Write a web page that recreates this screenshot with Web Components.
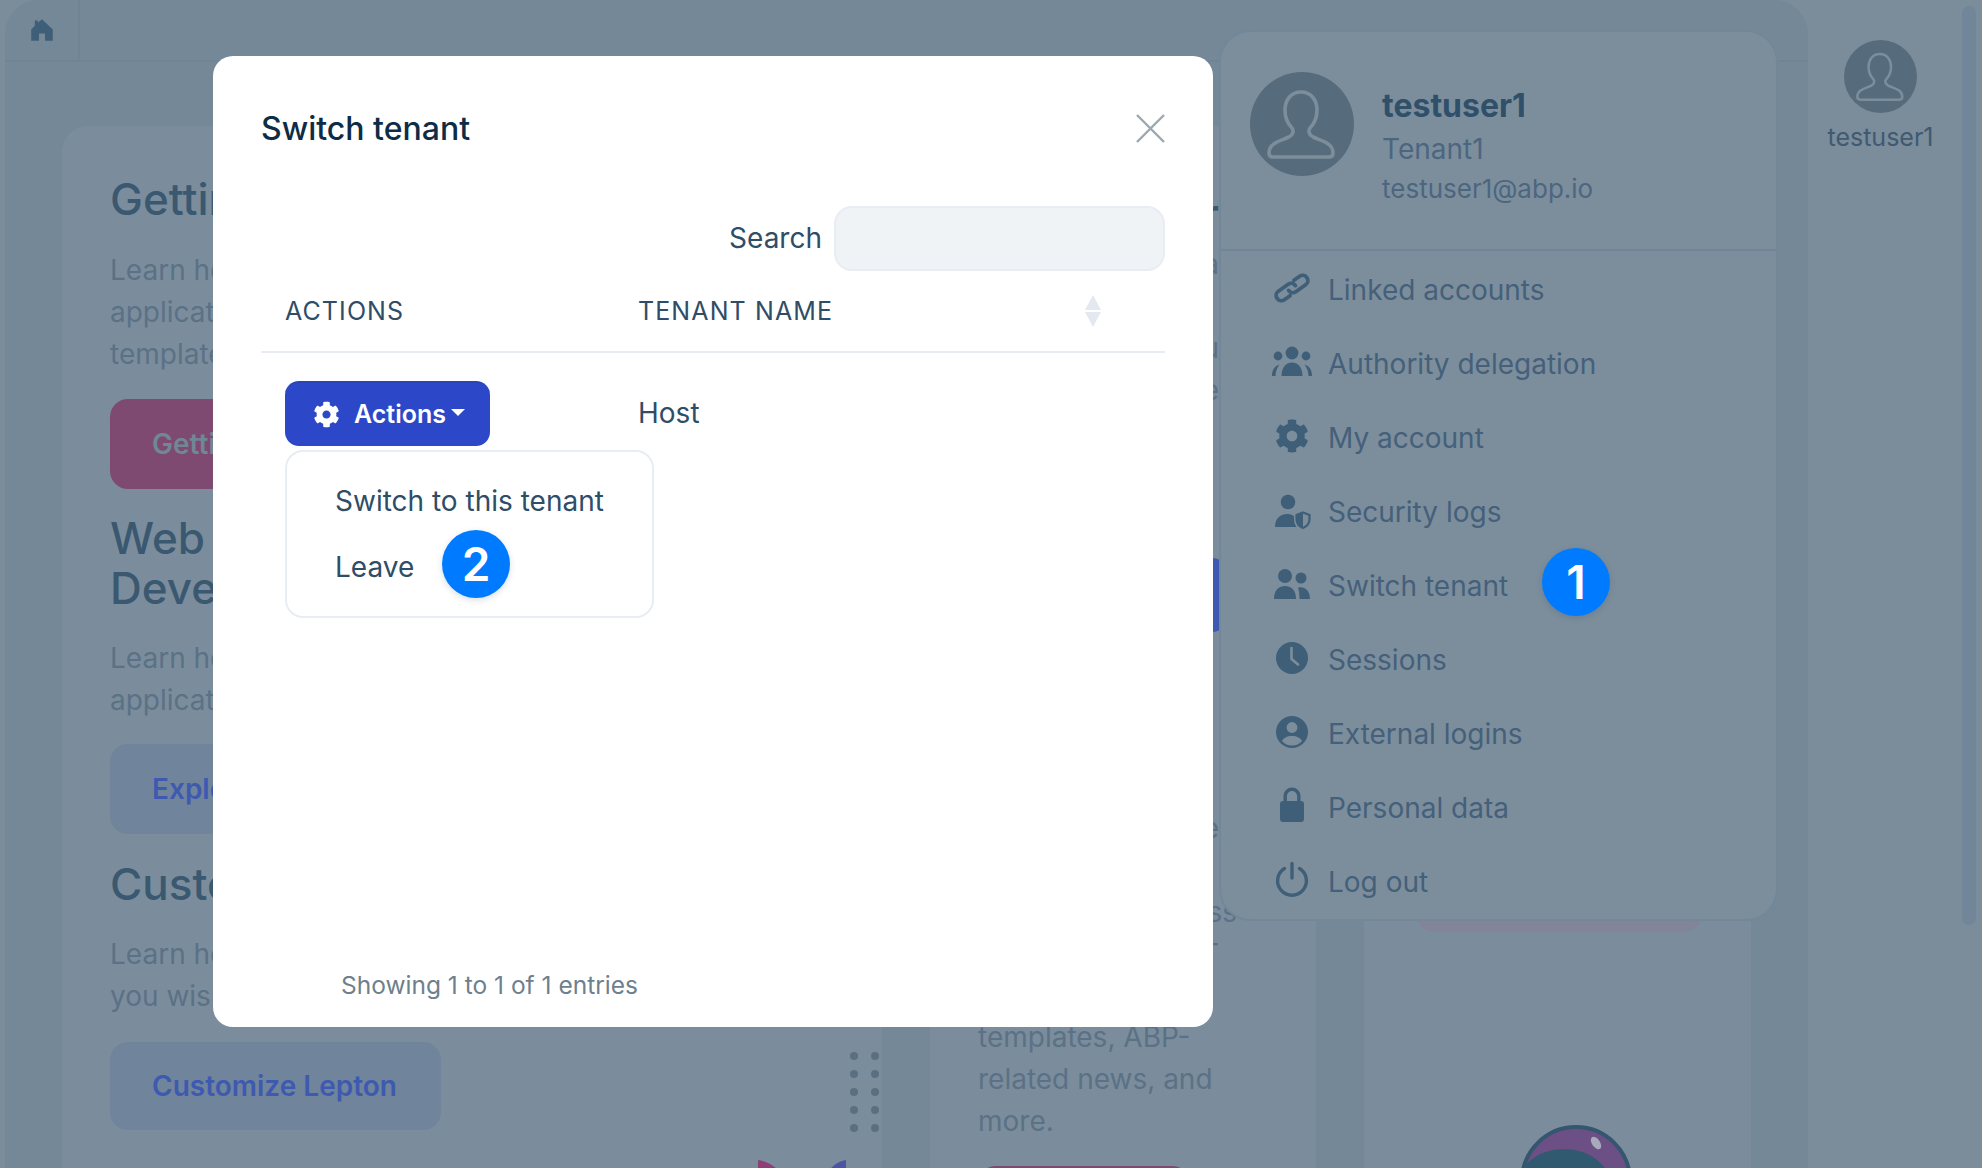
<!doctype html>
<html lang="en">
<head>
<meta charset="utf-8">
<title>Switch tenant</title>
<style>
  html, body { margin: 0; height: 100%; overflow: hidden; }
  body { font-family: Inter, "Liberation Sans", sans-serif; background: #7b8c9b; color: #45607a; }
</style>
</head>
<body>
<x-shell></x-shell>
<script>
const component = (name, html) => customElements.define(name, class extends HTMLElement {
  constructor() {
    super();
    this.attachShadow({ mode: "open" }).innerHTML = html;
  }
});

const ICONS = {
  home: `<path d="M20 2 L38 19 V38 H25 V26 H15 V38 H2 V19 L8 13 V4 H13 V8Z"/>`,
  link: `<g transform="rotate(-35 20 20)" fill="none" stroke="currentColor" stroke-width="3.800" stroke-linecap="round"><path d="M14 25.200H7a5.200 5.200 0 0 1 0-10.400H19a5.200 5.200 0 0 1 5.200 5.200"/><path d="M15.800 20a5.200 5.200 0 0 0 5.200 5.200H33a5.200 5.200 0 0 0 0-10.400H26"/></g>`,
  users: `<circle cx="20" cy="11" r="6.400"/><circle cx="6" cy="14" r="4.400"/><circle cx="34" cy="14" r="4.400"/><path d="M9.500 34c0-8 4-13.500 10.500-13.500S30.500 26 30.500 34z"/><path d="M0 34c0-6 2.500-10 7.500-11.500C5 26 3.500 30 3.500 34z"/><path d="M40 34c0-6-2.500-10-7.500-11.500C35 26 36.500 30 36.500 34z"/>`,
  gear: `<path transform="translate(3 3) scale(.0664)" d="M487.400 315.700l-42.600-24.600c4.300-23.200 4.300-47 0-70.200l42.600-24.600c4.900-2.800 7.100-8.600 5.500-14-11.100-35.600-30-67.800-54.700-94.600-3.800-4.100-10-5.100-14.800-2.300L380.800 110c-17.900-15.400-38.500-27.300-60.800-35.100V25.800c0-5.600-3.900-10.500-9.400-11.700-36.700-8.200-74.300-7.800-109.200 0-5.500 1.200-9.400 6.100-9.400 11.700V75c-22.200 7.900-42.800 19.800-60.800 35.100L88.700 85.500c-4.900-2.800-11-1.900-14.800 2.300-24.700 26.700-43.600 58.900-54.700 94.600-1.700 5.400.6 11.200 5.500 14L67.300 221c-4.300 23.200-4.300 47 0 70.200l-42.600 24.600c-4.900 2.800-7.100 8.600-5.500 14 11.100 35.600 30 67.800 54.700 94.600 3.800 4.100 10 5.100 14.800 2.300l42.600-24.600c17.900 15.400 38.500 27.300 60.800 35.100v49.200c0 5.600 3.900 10.500 9.400 11.700 36.700 8.200 74.300 7.800 109.200 0 5.500-1.200 9.400-6.100 9.400-11.700v-49.200c22.200-7.900 42.800-19.800 60.800-35.100l42.600 24.600c4.900 2.800 11 1.900 14.800-2.300 24.700-26.700 43.600-58.900 54.700-94.600 1.500-5.500-.7-11.300-5.600-14.100zM256 336c-44.100 0-80-35.900-80-80s35.900-80 80-80 80 35.900 80 80-35.900 80-80 80z"/>`,
  shield: `<circle cx="16" cy="12" r="7.300"/><path d="M3 37c0-8 5-13 12-13 2 0 3.500.3 5 1 1.300.6 2 1 2 1v3c0 3 1 6 2.500 8z"/><path d="M31 22.500l6.500 2.500v4c0 4.500-2.800 7.500-6.500 9-3.700-1.500-6.500-4.500-6.500-9v-4z" fill="none" stroke="currentColor" stroke-width="2.200"/><path d="M31 22.500V38c-3.700-1.500-6.500-4.500-6.500-9v-4z"/>`,
  swap: `<circle cx="13" cy="12" r="7"/><circle cx="29" cy="14" r="5.500"/><path d="M2 35c0-8 4-13 11-13s11 5 11 13z"/><path d="M26 23.500c6.500-1.500 12 3 12 11.500H27.500c0-4.500-.5-8.500-1.500-11.500z"/>`,
  clock: `<circle cx="20" cy="20" r="16"/><path d="M19.500 10V21l6.500 5.500" fill="none" stroke="#7c8e9c" stroke-width="2.600" stroke-linecap="round" stroke-linejoin="round"/>`,
  person: `<circle cx="20" cy="20" r="16"/><circle cx="20" cy="15.500" r="5.400" fill="#7c8e9c"/><path d="M10 29c1.500-3 5-5 10-5s8.500 2 10 5c-2.500 3-6 4.500-10 4.500s-7.500-1.500-10-4.500z" fill="#7c8e9c"/>`,
  lock: `<rect x="8" y="15" width="24" height="21" rx="3"/><path d="M13.200 16v-6a6.800 6.800 0 0 1 13.600 0v6" fill="none" stroke="currentColor" stroke-width="3.400"/>`,
  power: `<path d="M12.500 8.500A14.400 14.400 0 1 0 27.500 8.500" fill="none" stroke="currentColor" stroke-width="3.400" stroke-linecap="round"/><path d="M20 3.500V18" fill="none" stroke="currentColor" stroke-width="3.400" stroke-linecap="round"/>`
};

class XIcon extends HTMLElement {
  constructor() {
    super();
    this.attachShadow({ mode: "open" });
  }

  connectedCallback() {
    this.shadowRoot.innerHTML = `
      <style>
        :host { display: block; width: 40px; height: 40px; flex: none; color: #3f5f78; }
        svg { display: block; width: 100%; height: 100%; fill: currentColor; }
      </style>
      <svg viewBox="0 0 40 40">${ICONS[this.getAttribute("name")]}</svg>`;
  }
}
customElements.define("x-icon", XIcon);

component("x-avatar", `
  <style>
    :host { display: block; width: var(--size, 104px); height: var(--size, 104px); flex: none; }
    svg { display: block; width: 100%; height: 100%; }
  </style>
  <svg viewBox="0 0 104 104">
    <circle cx="52" cy="52" r="52" fill="#566c7d"/>
    <path d="M51 20C41 20 35 28 35 38C35 47 38 52 42 56C44 59 43 63 39 65C30 69 19 71 19 81Q19 85 23 85H79Q83 85 83 81C83 71 72 69 63 65C59 63 58 59 60 56C64 52 67 47 67 38C67 28 61 20 51 20Z" fill="none" stroke="#7c8e9c" stroke-width="3.600"/>
  </svg>`);

component("x-step-badge", `
  <style>
    :host {
      position: absolute; display: flex; align-items: center; justify-content: center;
      width: 68px; height: 68px; border-radius: 50%;
      background: #007bff; color: #fff;
      font: 600 46px/1 Inter, "Liberation Sans", sans-serif;
      box-shadow: 0 2px 6px rgba(40, 60, 90, .18);
    }
  </style>
  <slot></slot>`);

component("x-soft-button", `
  <style>
    :host {
      display: flex; align-items: center; box-sizing: border-box;
      height: var(--h, 90px); width: var(--w, 331px); padding-left: 42px; flex: none;
      border-radius: 18px; background: var(--bg, #70849c); color: var(--fg, #3e5ab0);
      font: 600 28px/1 Inter, "Liberation Sans", sans-serif; white-space: nowrap; overflow: hidden;
    }
  </style>
  <slot></slot>`);

component("x-menu-item", `
  <style>
    :host { display: flex; align-items: center; height: 74px; padding-left: 51px; gap: 16px; color: #45607a; font-size: 28px; white-space: nowrap; position: relative; }
    ::slotted(x-icon) { margin-top: -4px; }
  </style>
  <slot></slot>`);

component("x-account-menu", `
  <style>
    :host {
      position: absolute; left: 1219px; top: 30px; width: 559px; height: 891px; box-sizing: border-box;
      display: block; background: #7c8e9c; border: 2px solid #72879a; border-radius: 32px;
    }
    header { display: flex; height: 219px; box-sizing: border-box; padding: 40px 0 0 29px; gap: 28px; border-bottom: 2px solid #70859a; }
    .who { display: flex; flex-direction: column; }
    .name { font-size: 32px; font-weight: 700; line-height: 40px; margin-top: 14px; color: #30506a; }
    .tenant { font-size: 28px; line-height: 40px; margin-top: 3px; color: #4c6680; }
    .mail { font-size: 26px; line-height: 40px; color: #4c6680; }
    nav { padding-top: 2px; }
  </style>
  <header>
    <x-avatar></x-avatar>
    <div class="who">
      <div class="name">testuser1</div>
      <div class="tenant">Tenant1</div>
      <div class="mail">testuser1@abp.io</div>
    </div>
  </header>
  <nav><slot></slot></nav>`);

component("x-actions-menu", `
  <style>
    :host { display: block; position: relative; width: 205px; height: 65px; }
    button {
      display: flex; align-items: center; box-sizing: border-box; width: 205px; height: 65px; padding: 0 0 0 26px; gap: 12px;
      background: #2c48c8; border: 0; border-top: 2px solid #2a44ba; border-radius: 14px; color: #fff;
      font: 600 25px/1 Inter, "Liberation Sans", sans-serif;
    }
    x-icon { width: 31px; height: 31px; color: #fff; }
    .label { display: flex; align-items: center; gap: 5px; }
    .caret { width: 0; height: 0; border: 7px solid transparent; border-top-color: #fff; border-bottom: 0; margin-top: -4px; }
    .menu {
      position: absolute; left: 0; top: 69px; width: 369px; height: 168px; box-sizing: border-box;
      background: #fff; border: 2px solid #e8edf3; border-radius: 18px; padding: 29px 0 0 48px;
      font-size: 28px; color: #2f4d66; z-index: 2;
    }
    .menu div { width: fit-content; line-height: 40px; white-space: nowrap; }
    .menu div + div { margin-top: 26px; }
    x-step-badge { left: 155px; top: 78px; }
  </style>
  <button><x-icon name="gear"></x-icon><span class="label">Actions<span class="caret"></span></span></button>
  <div class="menu">
    <div>Switch to this tenant</div>
    <div>Leave</div>
    <x-step-badge>2</x-step-badge>
  </div>`);

component("x-tenant-modal", `
  <style>
    :host {
      position: absolute; left: 213px; top: 56px; width: 1000px; height: 971px; box-sizing: border-box;
      display: flex; flex-direction: column; padding: 48px 48px 27px; background: #fff; border-radius: 20px;
      color: #2f4d66; font-size: 28px; z-index: 3;
    }
    .title { display: flex; justify-content: space-between; align-items: center; height: 48px; font-size: 32px; font-weight: 500; color: #0f2c46; }
    .close { width: 29px; height: 29px; display: block; }
    .search { display: flex; justify-content: flex-end; align-items: center; gap: 12px; margin-top: 54px; }
    .search span { margin-top: -2px; }
    .field { width: 331px; height: 65px; box-sizing: border-box; background: #eff3f6; border: 2px solid #e8edf3; border-radius: 18px; }
    .head { display: flex; align-items: center; height: 82px; box-sizing: border-box; border-bottom: 2px solid #e8edf3; font-size: 25px; letter-spacing: 1.100px; }
    .col-a { width: 377px; padding-left: 24px; box-sizing: border-box; flex: none; }
    .col-b { flex: 1; }
    .sort { width: 16px; height: 32px; margin-right: 64px; display: block; }
    .row { display: flex; align-items: center; height: 65px; margin-top: 28px; }
    .row .col-b { margin-top: -2px; }
    .foot { margin-top: auto; padding-left: 80px; font-size: 24.500px; line-height: 30px; color: #6f7f8c; }
  </style>
  <div class="title">
    <span>Switch tenant</span>
    <svg class="close" viewBox="0 0 29 29"><path d="M1 1L28 28M28 1L1 28" stroke="#9aa8b2" stroke-width="2.400" fill="none"/></svg>
  </div>
  <div class="search"><span>Search</span><div class="field"></div></div>
  <div class="head">
    <div class="col-a">ACTIONS</div>
    <div class="col-b">TENANT NAME</div>
    <svg class="sort" viewBox="0 0 16 32"><path d="M8 0L16 15H0Z M8 32L0 17H16Z" fill="#e4e9f1"/></svg>
  </div>
  <div class="row">
    <div class="col-a"><x-actions-menu></x-actions-menu></div>
    <div class="col-b">Host</div>
  </div>
  <div class="foot">Showing 1 to 1 of 1 entries</div>`);

component("x-intro-card", `
  <style>
    :host { display: block; box-sizing: border-box; height: 1100px; padding: 48px 0 0 48px; background: #7b8d9c; border-radius: 26px 0 0 0; color: #5a7186; font-size: 28px; line-height: 42px; white-space: nowrap; overflow: hidden; }
    h2 { margin: 0; font-size: 44px; font-weight: 500; line-height: 50px; color: #3a5870; }
    p { margin: 0; }
    .one { margin-top: 24px; }
    .lead { margin-top: 25px; }
    x-soft-button { margin: 24px 0; }
    .actions { display: flex; justify-content: space-between; align-items: flex-start; margin-top: 25px; padding-right: 3px; }
    .dots { display: grid; grid-template-columns: 8px 8px; gap: 10px 13px; margin-top: 10px; }
    .dots i { width: 8px; height: 8px; border-radius: 50%; background: #5a6f82; }
    .art { display: block; margin: 28px 0 0 648px; }
  </style>
  <h2>Getting</h2>
  <p class="lead">Learn how</p><p>application</p><p>templates</p>
  <x-soft-button style="--bg:#7f4a72;--fg:#6f8797;--w:500px">Getting</x-soft-button>
  <h2>Web App</h2><h2>Develop</h2>
  <p class="one">Learn how</p><p>application</p>
  <x-soft-button style="--w:500px;margin:23px 0 25px">Explore</x-soft-button>
  <h2>Customize</h2>
  <p class="one">Learn how</p><p>you wish</p>
  <div class="actions">
    <x-soft-button style="margin:0;--h:88px">Customize Lepton</x-soft-button>
    <div class="dots"><i></i><i></i><i></i><i></i><i></i><i></i><i></i><i></i><i></i><i></i></div>
  </div>
  <svg class="art" width="90" height="60" viewBox="0 0 90 60"><path d="M0 0C14 2 28 14 34 30L0 30Z" fill="#8e3f78"/><path d="M88 0C74 2 68 14 60 30L88 30Z" fill="#4c55a5"/></svg>`);

component("x-news-card", `
  <style>
    :host { display: block; box-sizing: border-box; height: 1100px; width: 386px; flex: none; padding: 0 0 0 48px; background: #7b8d9c; color: #5a7186; font-size: 28px; line-height: 42px; white-space: nowrap; overflow: hidden; }
    .tail { text-align: right; width: 241px; }
    .tail.wide { width: 259px; }
    .h { font-size: 44px; font-weight: 500; line-height: 50px; margin-top: 63px; color: #3a5870; }
    .first { margin-top: 4px; }
    .cta { width: 250px; height: 74px; margin-top: 147px; background: #3e5ab0; border-radius: 16px; }
    .para { margin-top: 175px; }
    .lines { margin-top: -1px; }
    x-soft-button { margin-top: 24px; --bg:#7f4a72; --w:212px; }
  </style>
  <div class="tail h">r</div>
  <div class="tail first">a</div>
  <div class="tail">&nbsp;</div>
  <div class="tail">u</div>
  <div class="tail">e</div>
  <div class="cta"></div>
  <div class="tail para">e</div>
  <div class="tail">&nbsp;</div>
  <div class="tail wide">access</div>
  <div class="tail">T</div>
  <div class="tail">&nbsp;</div>
  <div class="lines">templates, ABP-</div>
  <div>related news, and</div>
  <div>more.</div>
  <x-soft-button>&nbsp;</x-soft-button>`);

component("x-promo-card", `
  <style>
    :host { display: block; box-sizing: border-box; height: 1100px; width: 387px; flex: none; padding: 716px 0 0 51px; background: #7b8d9c; overflow: hidden; }
    .cta { width: 288px; height: 90px; background: #828498; border-radius: 0 0 20px 20px; }
    svg { display: block; margin: 193px 0 0 105px; }
  </style>
  <div class="cta"></div>
  <svg width="112" height="60" viewBox="0 0 112 60">
    <ellipse cx="56" cy="56" rx="54" ry="54" fill="#6c4f85" stroke="#35566f" stroke-width="4"/>
    <ellipse cx="44" cy="68" rx="50" ry="44" fill="#2f5a70"/>
    <ellipse cx="76" cy="18" rx="4" ry="7" transform="rotate(-35 76 18)" fill="#a9a9bd"/>
  </svg>`);

component("x-shell", `
  <style>
    :host { display: flex; height: 1168px; width: 1982px; overflow: hidden; position: relative; }
    .panel { width: 1803px; margin-left: 5px; flex: none; background: #748898; border-radius: 34px 34px 0 0; }
    .bar { display: flex; height: 62px; box-sizing: border-box; border-bottom: 2px solid #708497; }
    .home { display: flex; align-items: center; justify-content: center; width: 73px; border-right: 2px solid #708497; }
    .home x-icon { width: 24px; height: 24px; margin-left: 1px; }
    .grid { display: flex; padding: 64px 0 0 57px; gap: 48px; }
    x-intro-card { width: 820px; flex: none; }
    .rail { flex: 1; display: flex; flex-direction: column; align-items: center; padding: 40px 29px 0 0; font-size: 25px; color: #3f5a72; position: relative; }
    .rail span { margin-top: 9px; line-height: 30px; }
    .scroll { position: absolute; right: 6px; top: 6px; width: 14px; height: 919px; border-radius: 7px; background: #72869a; }
  </style>
  <div class="panel">
    <div class="bar"><div class="home"><x-icon name="home"></x-icon></div></div>
    <div class="grid">
      <x-intro-card></x-intro-card>
      <x-news-card></x-news-card>
      <x-promo-card></x-promo-card>
    </div>
  </div>
  <div class="rail">
    <x-avatar style="--size:73px"></x-avatar>
    <span>testuser1</span>
    <div class="scroll"></div>
  </div>
  <x-account-menu>
    <x-menu-item><x-icon name="link"></x-icon>Linked accounts</x-menu-item>
    <x-menu-item><x-icon name="users"></x-icon>Authority delegation</x-menu-item>
    <x-menu-item><x-icon name="gear"></x-icon>My account</x-menu-item>
    <x-menu-item><x-icon name="shield"></x-icon>Security logs</x-menu-item>
    <x-menu-item><x-icon name="swap"></x-icon>Switch tenant<x-step-badge style="left:321px;top:-1px">1</x-step-badge></x-menu-item>
    <x-menu-item><x-icon name="clock"></x-icon>Sessions</x-menu-item>
    <x-menu-item><x-icon name="person"></x-icon>External logins</x-menu-item>
    <x-menu-item><x-icon name="lock"></x-icon>Personal data</x-menu-item>
    <x-menu-item><x-icon name="power"></x-icon>Log out</x-menu-item>
  </x-account-menu>
  <x-tenant-modal></x-tenant-modal>`);
</script>
</body>
</html>
